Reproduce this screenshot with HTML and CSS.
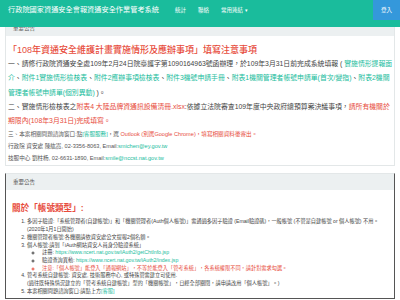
FILE: index.html
```html
<!DOCTYPE html>
<html>
<head>
  <title>行政院國家資通安全會報資通安全作業管考系統</title>
  <link rel="stylesheet" href="styles.css">
</head>
<body>
  <div class="navbar">
    <span class="brand">行政院國家資通安全會報資通安全作業管考系統</span>
    <span class="nav-link">統計</span>
    <span class="nav-link">聯絡</span>
    <span class="nav-link">常用連結 <span class="caret">▾</span></span>
    <span class="login">登入</span>
  </div>

  <div class="container">
    <div class="panel">
      <div class="panel-heading">重要公告</div>
      <div class="panel-body">
        <h3 class="notice-title">「108年資通安全維護計畫實施情形及應辦事項」填寫注意事項</h3>
        <p class="big">一、請修行政院資通安全處109年2月24日院臺護字第1090164963號函辦理，於109年3月31日前完成系統填報 ( <a>實施情形提報面介</a>、<a>附件1實施情形檢核表</a>、<a>附件2應辦事項檢核表</a>、<a>附件3機號申請手冊</a>、<a>附表1機關管理者帳號申請單(首次/變指)</a>、<a>附表2機關管理者帳號申請單(個別異動)</a> )。</p>
        <p class="big">二、實施情形檢核表之<span class="red">附表4 大陸品牌資通訊設備清冊.xlsx</span>:依據立法院審查109年度中央政府總預算案決議事項，<span class="red">請所有機關於期限內(108年3月31日)完成填寫。</span></p>
        <p class="small">三、本案相關問題諮詢窗口:點<a>[客服服務]</a>，選 <span class="red">Outlook (別選Google Chrome)，填寫相關資料後寄出。</span></p>
        <p class="small">行政院 資安處 陳紘嵩, 02-3356-8063, Email:<a>smichen@ey.gov.tw</a></p>
        <p class="small">技服中心 劉柱杨, 02-6631-1890, Email:<a>smile@nccst.nat.gov.tw</a></p>
      </div>
    </div>

    <div class="panel panel-last">
      <div class="panel-heading">重要公告</div>
      <div class="panel-body">
        <h3 class="account-title">關於「帳號類型」:</h3>
        <ol class="account-list">
          <li>多因子驗證:「系統管理者(自建帳號)」和「機關管理者(Auth個人帳號)」需通過多因子驗證 (Email驗證碼)，一般帳號 (不管是自建帳號 or 個人帳號) 不用。(2020年1月1日開始)</li>
          <li>機關管理者帳號:各機關請依資安處公文提報2個名額。</li>
          <li>個人帳號:請到「iAuth網站資安人員身分驗證系統」
            <ul>
              <li>註冊: <a>https://www.ncert.nat.gov.tw/iAuth2/getChtInfo.jsp</a></li>
              <li>驗證查詢異動: <a>https://www.ncert.nat.gov.tw/iAuth2/index.jsp</a></li>
              <li class="red">注意:「個人帳號」能登入「通報網站」，不等於能登入「管考系統」，各系統權限不同，請針對需求勾選。</li>
            </ul>
          </li>
          <li>管考系統自建帳號: 資安處, 技術服務中心, 或特殊管需建立可使用.<br>(過往既特殊情況建立的「管考系統自建帳號」型的「機關帳號」，日經全部關閉，請申請改用「個人帳號」。)</li>
          <li>本案相關問題諮詢窗口:請點上方<a>[客服]</a></li>
        </ol>
      </div>
    </div>
  </div>
</body>
</html>
```

FILE: styles.css
```css
body {
  margin: 0;
  font-family: "Liberation Sans", "Noto Sans CJK TC", sans-serif;
  color: #444444;
  background-color: #ffffff;
}

a {
  color: #18bc9c;
}

.red {
  color: #e74c3c;
}

.navbar {
  position: fixed;
  top: 0;
  left: 0;
  right: 0;
  height: 27px;
  background-color: #1abc9c;
  color: #ffffff;
  display: flex;
  align-items: flex-start;
  z-index: 10;
}

.brand {
  font-size: 7.2px;
  padding: 4px 10px 0 8px;
}

.nav-link {
  font-size: 5.5px;
  padding: 6px 6px 0 6px;
}

.caret {
  font-size: 5px;
}

.login {
  margin-left: auto;
  background-color: #3498db;
  font-size: 5.5px;
  width: 27px;
  height: 20px;
  display: flex;
  align-items: center;
  justify-content: center;
}

.container {
  padding: 19px 5px 0 5px;
}

.panel {
  border: 1px solid #e3e7e8;
  margin-bottom: 7px;
}

.panel-heading {
  background-color: #ecf0f1;
  height: 16px;
  line-height: 16px;
  font-size: 5.5px;
  color: #555555;
  padding-left: 7px;
}

.panel-body {
  padding: 7px 1px 1px 2px;
}

.notice-title {
  margin: 0;
  font-size: 9px;
  font-weight: 500;
  line-height: 14px;
  color: #e74c3c;
}

.big {
  margin: 0;
  font-size: 6.85px;
  line-height: 14.3px;
}

.small {
  margin: 0;
  font-size: 5.6px;
  line-height: 12px;
  color: #555555;
}

.panel-last {
  border-color: #555555;
  border-top-color: #e3e7e8;
  margin-bottom: 0;
}

.panel-last .panel-body {
  padding: 12px 7px 2px 6px;
}

.account-title {
  margin: 0 0 4px 0;
  font-size: 8.6px;
  line-height: 12px;
  color: #e74c3c;
}

.account-list {
  margin: 0;
  padding-left: 15px;
  font-size: 5.2px;
  line-height: 7.7px;
  color: #444444;
}

.account-list ul {
  margin: 0;
  padding-left: 15px;
  list-style-type: circle;
}
```
